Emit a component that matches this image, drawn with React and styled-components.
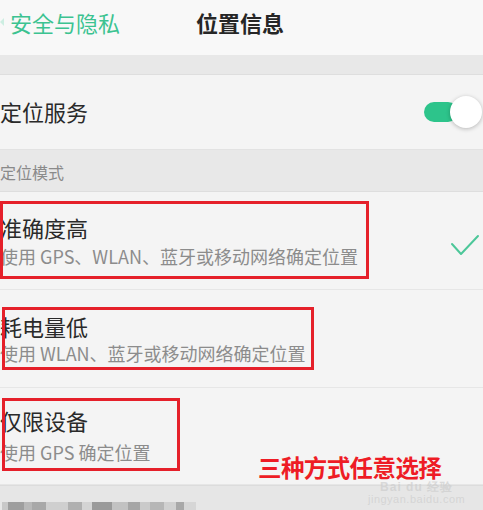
import React from 'react';
import styled, { createGlobalStyle } from 'styled-components';

const GlobalStyle = createGlobalStyle`
  html, body {
    margin: 0;
    padding: 0;
    background: #f4f4f4;
  }
  body {
    font-family: "Noto Sans CJK SC", "Noto Sans", sans-serif;
    overflow: hidden;
  }
`;

const Screen = styled.div`
  position: relative;
  width: 483px;
  height: 510px;
  overflow: hidden;
  background: #f4f4f4;
`;

const Header = styled.div`
  height: 55px;
  display: flex;
  align-items: center;
  background: #f8f8f8;
  padding-bottom: 12px;
  box-sizing: border-box;
`;

const Back = styled.span`
  display: flex;
  align-items: center;
  color: #3cc391;
  font-size: 22px;
  line-height: 1;
  width: 120px;

  &::before {
    content: '';
    display: inline-block;
    width: 0;
    height: 0;
    margin-right: 6px;
    border-top: 4px solid transparent;
    border-bottom: 4px solid transparent;
    border-right: 4px solid #cdeee2;
  }
`;

const Title = styled.span`
  margin-left: 76px;
  font-size: 22px;
  font-weight: 700;
  color: #262626;
  line-height: 1;
`;

const Band = styled.div`
  height: ${(p) => p.h}px;
  background: #e8e8e8;
  border-bottom: 1px solid #dedede;
  box-sizing: border-box;
  display: flex;
  align-items: center;
`;

const SectionLabel = styled.span`
  font-size: 16px;
  color: #8a8a8a;
  padding-top: 2px;
`;

const SwitchRow = styled.div`
  height: 75px;
  display: flex;
  align-items: center;
  justify-content: space-between;
  border-bottom: 1px solid #e2e2e2;
  box-sizing: border-box;
`;

const RowLabel = styled.span`
  font-size: 22px;
  color: #2a2a2a;
  padding-bottom: 2px;
`;

const Toggle = styled.div`
  position: relative;
  width: 60px;
  height: 36px;
  display: flex;
  align-items: center;
  margin-right: 1px;

  &::before {
    content: '';
    width: 34px;
    height: 20px;
    margin-left: 2px;
    border-radius: 10px;
    background: #2dc48b;
  }
`;

const Knob = styled.span`
  position: absolute;
  right: 0;
  top: 2px;
  width: 32px;
  height: 32px;
  border-radius: 50%;
  background: #ffffff;
  box-shadow: 0 1px 4px rgba(0, 0, 0, 0.25);
`;

const ModeRow = styled.div`
  position: relative;
  height: ${(p) => p.h}px;
  display: flex;
  align-items: center;
  justify-content: space-between;
  border-bottom: 1px solid #e6e6e6;
  box-sizing: border-box;
`;

const ModeText = styled.div`
  display: flex;
  flex-direction: column;
  gap: ${(p) => p.gap}px;
  margin-top: ${(p) => p.shift}px;
`;

const ModeTitle = styled.span`
  font-size: 22px;
  color: #2a2a2a;
  line-height: 24px;
`;

const ModeDesc = styled.span`
  font-size: 18px;
  color: #8c8c8c;
  line-height: 20px;
  white-space: nowrap;
`;

const Mark = styled.div`
  position: absolute;
  left: ${(p) => p.x}px;
  top: ${(p) => p.y}px;
  width: ${(p) => p.w}px;
  height: ${(p) => p.hh}px;
  border: 3px solid #e5202a;
  box-sizing: border-box;
  pointer-events: none;
`;

const Check = styled.svg`
  width: 30px;
  height: 24px;
  margin-right: 3px;
  margin-top: 8px;
`;

const Note = styled.span`
  position: absolute;
  left: 258px;
  top: 450px;
  font-size: 23.5px;
  font-weight: 700;
  color: #ee1c25;
  letter-spacing: -0.6px;
  z-index: 1;
`;

const Watermark = styled.div`
  position: absolute;
  left: 368px;
  top: 481px;
  display: flex;
  flex-direction: column;
  align-items: center;
  color: rgba(205, 205, 205, 0.7);
  font-family: "Liberation Sans", sans-serif;
  line-height: 1;
`;

const WmLogo = styled.span`
  font-size: 12px;
  font-weight: 700;
  letter-spacing: 1px;
`;

const WmSite = styled.span`
  font-size: 11px;
  margin-top: 1px;
  letter-spacing: 0.5px;
`;

const Footer = styled.div`
  height: 25px;
  background: #e6e6e6;
  border-top: 1px solid #dcdcdc;
  display: flex;
  align-items: flex-end;
  padding-left: 2px;
  box-sizing: border-box;
`;

const Blur = styled.span`
  display: inline-block;
  width: ${(p) => p.w}px;
  height: 8px;
  background: ${(p) => p.c};
`;

const blurBlocks = [
  [6, '#c8c8c8'], [16, '#9e9e9e'], [8, '#b8b8b8'], [14, '#a8a8a8'], [22, '#cfcfcf'],
  [14, '#b0b0b0'], [10, '#d4d4d4'], [20, '#9a9a9a'], [16, '#c2c2c2'], [12, '#a6a6a6'],
  [10, '#cacaca'], [14, '#b6b6b6'], [12, '#d0d0d0'], [8, '#a8a8a8'], [12, '#d6d6d6'],
];

const App = () => {
  return (
    <Screen>
      <GlobalStyle />
      <Header>
        <Back>安全与隐私</Back>
        <Title>位置信息</Title>
      </Header>
      <Band h={20} />
      <SwitchRow>
        <RowLabel>定位服务</RowLabel>
        <Toggle>
          <Knob />
        </Toggle>
      </SwitchRow>
      <Band h={42}>
        <SectionLabel>定位模式</SectionLabel>
      </Band>

      <ModeRow h={98}>
        <ModeText gap={7} shift={0}>
          <ModeTitle>准确度高</ModeTitle>
          <ModeDesc>使用 GPS、WLAN、蓝牙或移动网络确定位置</ModeDesc>
        </ModeText>
        <Check viewBox="0 0 30 24">
          <path d="M2 11 L11 21 L28 3" fill="none" stroke="#4cc799" strokeWidth="2" strokeLinecap="round" strokeLinejoin="round" />
        </Check>
        <Mark x={0} y={9} w={369} hh={78} />
      </ModeRow>

      <ModeRow h={98}>
        <ModeText gap={5} shift={0}>
          <ModeTitle>耗电量低</ModeTitle>
          <ModeDesc>使用 WLAN、蓝牙或移动网络确定位置</ModeDesc>
        </ModeText>
        <Mark x={2} y={17} w={312} hh={63} />
      </ModeRow>

      <ModeRow h={97}>
        <ModeText gap={10} shift={-2}>
          <ModeTitle>仅限设备</ModeTitle>
          <ModeDesc>使用 GPS 确定位置</ModeDesc>
        </ModeText>
        <Mark x={2} y={10} w={178} hh={73} />
      </ModeRow>

      <Footer>
        {blurBlocks.map(([w, c], i) => (
          <Blur key={i} w={w} c={c} />
        ))}
      </Footer>

      <Note>三种方式任意选择</Note>
      <Watermark>
        <WmLogo>Bai du 经验</WmLogo>
        <WmSite>jingyan.baidu.com</WmSite>
      </Watermark>
    </Screen>
  );
};

export default App;
